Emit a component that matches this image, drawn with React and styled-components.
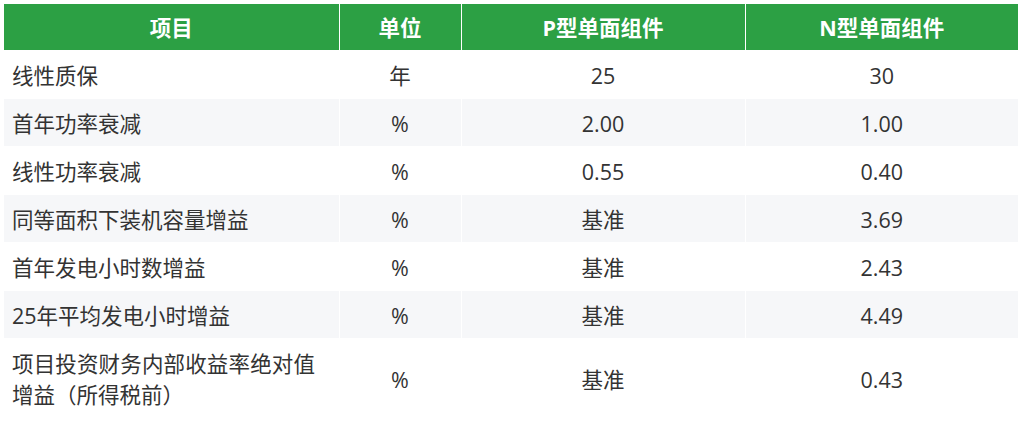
import React from "react";
import styled, { createGlobalStyle } from "styled-components";

const colors = {
  green: "#2ca044",
  stripe: "#f6f7f9",
  text: "#333333",
  white: "#ffffff",
};

const GlobalStyle = createGlobalStyle`
  body {
    margin: 0;
    background: ${colors.white};
    font-family: "Open Sans", "Noto Sans CJK SC", sans-serif;
  }
`;

// item may be split into lines; every line but the last is justified
const rows = [
  { item: ["线性质保"], unit: "年", p: "25", n: "30" },
  { item: ["首年功率衰减"], unit: "%", p: "2.00", n: "1.00" },
  { item: ["线性功率衰减"], unit: "%", p: "0.55", n: "0.40" },
  { item: ["同等面积下装机容量增益"], unit: "%", p: "基准", n: "3.69" },
  { item: ["首年发电小时数增益"], unit: "%", p: "基准", n: "2.43" },
  { item: ["25年平均发电小时增益"], unit: "%", p: "基准", n: "4.49" },
  {
    item: ["项目投资财务内部收益率绝对值", "增益（所得税前）"],
    unit: "%",
    p: "基准",
    n: "0.43",
  },
];

const App = () => {
  return (
    <>
      <GlobalStyle />
      <Wrapper>
        <Table>
          <colgroup>
            <col style={{ width: 335 }} />
            <col style={{ width: 122 }} />
            <col style={{ width: 284 }} />
            <col style={{ width: 273 }} />
          </colgroup>
          <thead>
            <tr>
              <HeadCell>项目</HeadCell>
              <HeadCell>单位</HeadCell>
              <HeadCell>P型单面组件</HeadCell>
              <HeadCell>N型单面组件</HeadCell>
            </tr>
          </thead>
          <tbody>
            {rows.map((row, i) => (
              <Row key={row.item.join("")} $striped={i % 2 === 1}>
                <ItemCell>
                  {row.item.map((line, j) => (
                    <Line key={line} $justify={j < row.item.length - 1}>
                      {line}
                    </Line>
                  ))}
                </ItemCell>
                <Cell>{row.unit}</Cell>
                <Cell>{row.p}</Cell>
                <Cell>{row.n}</Cell>
              </Row>
            ))}
          </tbody>
        </Table>
      </Wrapper>
    </>
  );
};

export default App;

const Wrapper = styled.div`
  padding: 4px;
`;

const Table = styled.table`
  width: 1014px;
  table-layout: fixed;
  border-collapse: collapse;
  font-size: 21.5px;
  color: ${colors.text};
`;

const HeadCell = styled.th`
  background: ${colors.green};
  color: ${colors.white};
  font-weight: 700;
  font-size: 21.5px;
  line-height: 31px;
  padding: 8px 8px 7px;
  text-align: center;
  border: 1px solid ${colors.white};
  border-top: none;

  &:first-child {
    border-left: none;
  }

  &:last-child {
    border-right: none;
  }
`;

const Row = styled.tr`
  background: ${(p) => (p.$striped ? colors.stripe : colors.white)};
`;

const Cell = styled.td`
  line-height: 31px;
  padding: 9px 8px 7px;
  text-align: center;
  border: 1px solid ${colors.white};

  &:last-child {
    border-right: none;
  }
`;

const ItemCell = styled(Cell)`
  text-align: left;
  border-left: none;
`;

const Line = styled.span`
  display: block;
  width: 303px;
  white-space: nowrap;
  text-align: ${(p) => (p.$justify ? "justify" : "left")};
  text-align-last: ${(p) => (p.$justify ? "justify" : "auto")};
`;
